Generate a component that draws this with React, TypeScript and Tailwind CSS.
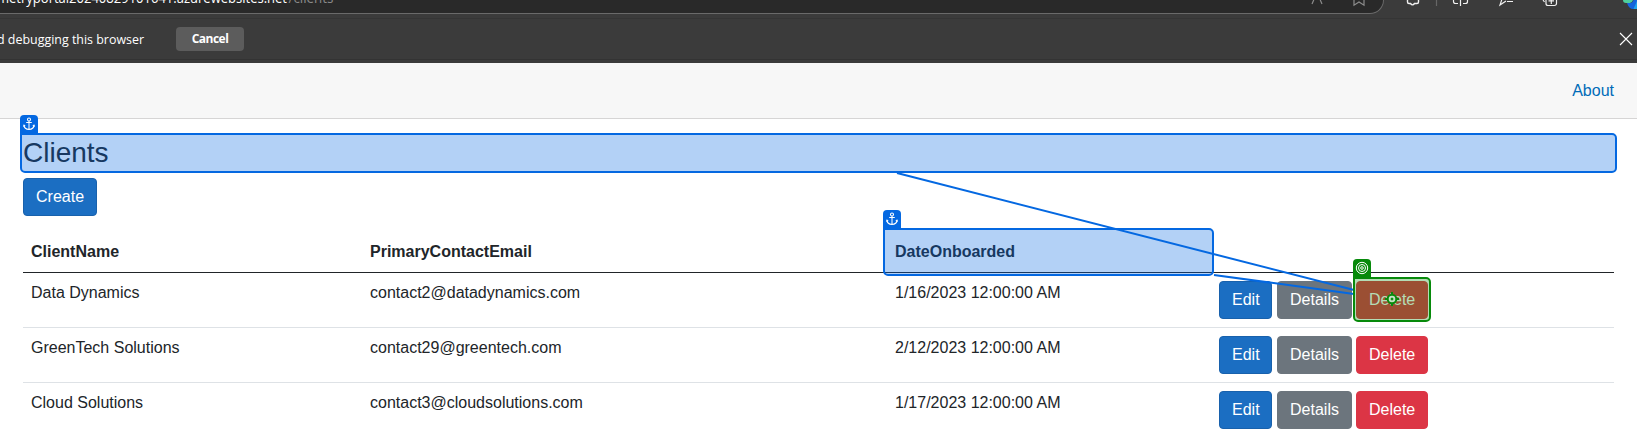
import React from "react";

const btn = "h-[38px] rounded border text-base leading-6 px-3 py-[6px] text-white";

const rows = [
  ["Data Dynamics", "contact2@datadynamics.com", "1/16/2023 12:00:00 AM"],
  ["GreenTech Solutions", "contact29@greentech.com", "2/12/2023 12:00:00 AM"],
  ["Cloud Solutions", "contact3@cloudsolutions.com", "1/17/2023 12:00:00 AM"],
];

function Anchor() {
  return (
    <svg width="12" height="14" viewBox="0 0 12 14" fill="none" stroke="#fff" strokeWidth="1.05" className="block">
      <circle cx="6" cy="2.4" r="1.5" />
      <path d="M6 3.9V12.6M3.2 5.5h5.6M1 8.4c.2 2.6 2.400 4 5 4.200c2.600-.2 4.800-1.600 5-4.200M.3 9.600L1 8.200l1.200 1M11.700 9.600L11 8.200l-1.200 1" />
    </svg>
  );
}

function Target() {
  return (
    <svg width="14" height="14" viewBox="0 0 14 14" fill="none" stroke="#fff" className="block">
      <circle cx="7" cy="7" r="5.7" />
      <circle cx="7" cy="7" r="3.500" />
      <circle cx="7" cy="7" r="1.300" />
    </svg>
  );
}

function BrowserBar() {
  return (
    <div className="relative h-[18px] overflow-hidden bg-[#3b3b3b]">
      <div className="-mt-[14px] h-7 w-[1384px] rounded-r-[14px] border-b border-r border-[#6a6a6a] bg-[#292929]">
        <div className="h-[22px] pt-[1px] font-['Open_Sans',sans-serif]">
          <svg width="345" height="22" className="block overflow-visible">
            <text x="-3" y="16" fontSize="14.5" fill="#fff" textLength="290" lengthAdjust="spacingAndGlyphs">
              metryportal20240829101641.azurewebsites.net
            </text>
            <text x="288.500" y="16" fontSize="14.5" fill="#8a8a8a" textLength="45" lengthAdjust="spacingAndGlyphs">/clients</text>
          </svg>
        </div>
      </div>
      <svg className="absolute top-0 right-0" width="357" height="18" fill="none" stroke="#f0f0f0" strokeWidth="1.2">
        <path d="M32 4L35 -3M42 4L39 -3" stroke="#8c8c8c" />
        <path d="M74 -1V5.2L79 2L84 5.2V-1" stroke="#8c8c8c" />
        <path d="M127.500 -1V2q0 1.500 1.500 1.500h1.500q2 2.800 4 0h2.500q1.500 0 1.500-1.500V-1" strokeWidth="1.400" />
        <path d="M156.500 0V6" stroke="#666" />
        <path d="M173.500 0V1.500q0 2 2 2H178M183 3.500h2.500q2 0 2-2V0M180.500 0V6" />
        <path d="M222 -1L220 5L226 1M227 1.500h6" />
        <rect x="266" y="-5" width="10.500" height="10.500" rx="2" />
        <path d="M271.300 -2V4M268.500 .900h5.500M263 0l1.500 2" />
        <path d="M343 0h10q-1 3-3 3h-4q-3 0-3-3z" fill="#4fcf9d" stroke="none" />
        <path d="M347 3h3q2.500 0 3.500-3H357V9h-4q-4 0-6-6z" fill="#1665dc" stroke="none" />
        <path d="M353.500 9L357 1V9z" fill="#22a5ec" stroke="none" />
      </svg>
    </div>
  );
}

export default function App() {
  return (
    <div className="relative h-[436px] w-[1637px] overflow-hidden bg-white font-['Liberation_Sans',Arial,sans-serif] text-base text-[#212529]">
      <BrowserBar />
      <div className="flex h-[45px] items-start border-t border-[#353535] bg-[#3b3b3b] font-['Open_Sans',sans-serif] text-white">
        <div className="flex h-[41px] w-full items-center border-b border-[#333]">
          <svg width="176" height="40" className="block shrink-0">
            <text x="-3" y="24.500" fontSize="13.5" fill="#fff" textLength="147" lengthAdjust="spacingAndGlyphs">d debugging this browser</text>
          </svg>
          <button className="h-6 w-[68px] rounded-[4px] bg-[#5c5c5c] text-[12px] leading-6 font-bold tracking-[-0.5px]">Cancel</button>
          <svg width="14" height="14" viewBox="0 0 14 14" className="mr-[4px] ml-auto" fill="none" stroke="#fff" strokeWidth="1.1">
            <path d="M1 1L13 13M13 1L1 13" />
          </svg>
        </div>
      </div>
      <div className="flex h-14 items-center justify-end border-b border-[#d6d5d5] bg-[#f7f7f7] pr-[23px]">
        <a className="text-[#006bb7]">About</a>
      </div>
      <main className="pr-[23px] pl-[23px]">
        <h3 className="pt-[17px] text-[28px] leading-[34px]">Clients</h3>
        <button className={`${btn} mt-[8px] block border-[#1861ac] bg-[#1b6ec2]`}>Create</button>
        <div className="mt-4 grid grid-cols-[339px_525px_324px_403px] border-b border-[#212529] font-bold">
          {["ClientName", "PrimaryContactEmail", "DateOnboarded", ""].map((h, i) => (
            <div key={i} className="h-10 p-2">{h}</div>
          ))}
        </div>
        {rows.map((r) => (
          <div key={r[0]} className="grid h-[55px] grid-cols-[339px_525px_324px_403px] border-b border-[#dee2e6]">
            {r.map((c) => <div key={c} className="p-2">{c}</div>)}
            <div className="flex gap-1 p-2">
              <button className={`${btn} mr-px w-[53px] border-[#1861ac] bg-[#1b6ec2]`}>Edit</button>
              <button className={`${btn} w-[75px] border-[#6c757d] bg-[#6c757d]`}>Details</button>
              <button className={`${btn} w-[72px] border-[#dc3545] bg-[#dc3545]`}>Delete</button>
            </div>
          </div>
        ))}
      </main>

      <div className="absolute top-[133px] left-[20px] h-[40px] w-[1597px] rounded-[5px] rounded-tl-none border-2 border-[#0468e1] bg-[#0468e1]/30" />
      <div className="absolute top-[115px] left-[20px] flex h-[18px] w-[18px] items-center justify-center rounded-t-[4px] bg-[#0468e1]"><Anchor /></div>
      <div className="absolute top-[228px] left-[883px] h-[48px] w-[331px] rounded-[5px] rounded-tl-none border-2 border-[#0468e1] bg-[#0468e1]/30" />
      <div className="absolute top-[210px] left-[883px] flex h-[18px] w-[18px] items-center justify-center rounded-t-[4px] bg-[#0468e1]"><Anchor /></div>
      <svg className="absolute top-0 left-0" width="1637" height="436" fill="none" stroke="#0468e1" strokeWidth="2">
        <path d="M897 173L1354 290M1214 275L1354 294" />
      </svg>
      <div className="absolute top-[277px] left-[1353px] h-[45px] w-[78px] rounded-[5px] rounded-tl-none border-2 border-[#078a0b] bg-[#078a0b]/30" />
      <div className="absolute top-[259px] left-[1353px] flex h-[18px] w-[18px] items-center justify-center rounded-t-[4px] bg-[#078a0b]"><Target /></div>
      <svg className="absolute top-[292px] left-[1385px]" width="14" height="14" fill="none" stroke="#078a0b" strokeWidth="2">
        <circle cx="7" cy="7" r="4.300" fill="#c4e2c4" />
        <circle cx="7" cy="7" r="1" fill="#078a0b" strokeWidth="1" />
        <path d="M7 0V2M7 12V14M0 7H2M12 7H14" />
      </svg>
    </div>
  );
}
